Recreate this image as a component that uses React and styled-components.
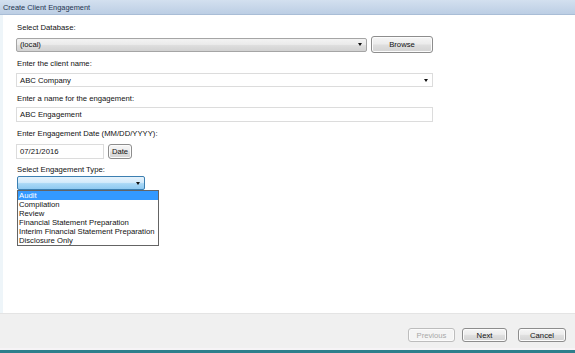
import React from "react";
import styled, { createGlobalStyle } from "styled-components";

const Global = createGlobalStyle`
  html, body { margin: 0; padding: 0; background: #ffffff; }
  body { font-family: "Liberation Sans", Arial, sans-serif; }
  #root { width: 575px; height: 353px; }
`;

const Window = styled.div`
  width: 575px;
  height: 353px;
  display: flex;
  flex-direction: column;
  box-sizing: border-box;
  border-bottom: 3px solid #2d7f8c;
  overflow: hidden;
  font-family: "Liberation Sans", Arial, sans-serif;
  font-size: 7.7px;
  color: #111111;
`;

const TitleBar = styled.div`
  height: 15px;
  flex: none;
  background: linear-gradient(#d3e0ef, #bccee4);
  border-bottom: 1px solid #a9bdd6;
  box-sizing: border-box;
  padding-left: 3px;
  display: flex;
  align-items: center;
  color: #1f3550;
  font-size: 7.4px;
`;

const Body = styled.div`
  flex: 1;
  position: relative;
  background: #ffffff;
  border-left: 3px solid #eef5f9;
  padding: 8px 0 0 13px;
  display: flex;
  flex-direction: column;
`;

const Field = styled.div`
  display: flex;
  flex-direction: column;
  margin-bottom: ${(p) => p.$mb || 7}px;
`;

const Label = styled.div`
  height: 10px;
  line-height: 10px;
  padding-left: 1px;
  margin-bottom: ${(p) => p.$mb ?? 4}px;
  white-space: nowrap;
`;

const Row = styled.div`
  display: flex;
  align-items: center;
  gap: ${(p) => p.$gap || 4}px;
`;

const Combo = styled.div`
  box-sizing: border-box;
  width: ${(p) => p.$w}px;
  height: 14px;
  display: flex;
  align-items: center;
  justify-content: space-between;
  padding: 0 3px 0 3px;
  border: 1px solid ${(p) => (p.$variant === "flat" ? "#dcdcdc" : p.$variant === "active" ? "#3c7fb1" : "#a5a5a5")};
  border-radius: ${(p) => (p.$variant === "flat" ? 0 : 2)}px;
  background: ${(p) =>
    p.$variant === "flat"
      ? "#ffffff"
      : p.$variant === "active"
      ? "linear-gradient(#e6f3fc 0%, #d4ebfb 45%, #a9d8f6 55%, #8ec9f1 100%)"
      : "linear-gradient(#f3f3f3 0%, #ebebeb 45%, #dddddd 55%, #d2d2d2 100%)"};
`;

const Caret = styled.span`
  width: 0;
  height: 0;
  border-left: 2.5px solid transparent;
  border-right: 2.5px solid transparent;
  border-top: 3px solid #111;
  margin-right: 1px;
`;

const TextBox = styled.div`
  box-sizing: border-box;
  width: ${(p) => p.$w}px;
  height: 15px;
  display: flex;
  align-items: center;
  padding-left: 3px;
  border: 1px solid #dcdcdc;
  background: #ffffff;
`;

const Button = styled.div`
  box-sizing: border-box;
  width: ${(p) => p.$w}px;
  height: ${(p) => p.$h || 14}px;
  display: flex;
  align-items: center;
  justify-content: center;
  border: 1px solid ${(p) => (p.$disabled ? "#bdbdbd" : "#8d8d8d")};
  border-radius: 3px;
  color: ${(p) => (p.$disabled ? "#a8a8a8" : "#111111")};
  background: ${(p) =>
    p.$disabled
      ? "#f4f4f4"
      : "linear-gradient(#f6f6f6 0%, #ececec 45%, #dedede 55%, #d3d3d3 100%)"};
  box-shadow: inset 0 0 0 1px ${(p) => (p.$disabled ? "#fbfbfb" : "#fcfcfc")};
`;

const DropList = styled.div`
  position: absolute;
  left: 14px;
  top: 175px;
  width: 142px;
  box-sizing: border-box;
  border: 1px solid #646464;
  background: #ffffff;
  display: flex;
  flex-direction: column;
`;

const Item = styled.div`
  height: 9px;
  line-height: 9px;
  padding-left: 1px;
  white-space: nowrap;
  color: ${(p) => (p.$selected ? "#ffffff" : "#111111")};
  background: ${(p) => (p.$selected ? "#3399ff" : "transparent")};
`;

const Footer = styled.div`
  height: 37px;
  flex: none;
  background: #f0f0f0;
  border-top: 1px solid #e4e4e4;
  border-bottom: 2px solid #f6f4f6;
  box-sizing: border-box;
  display: flex;
  justify-content: flex-end;
  align-items: flex-start;
  padding: 14px 9px 0 0;
  gap: 7px;
`;

const types = [
  "Audit",
  "Compilation",
  "Review",
  "Financial Statement Preparation",
  "Interim Financial Statement Preparation",
  "Disclosure Only",
];

export default function App() {
  return (
    <>
      <Global />
      <Window>
        <TitleBar>Create Client Engagement</TitleBar>
        <Body>
          <Field $mb={6}>
            <Label $mb={3}>Select Database:</Label>
            <Row $gap={4}>
              <Combo $w={351}>
                <span>(local)</span>
                <Caret />
              </Combo>
              <Button $w={62} $h={17}>Browse</Button>
            </Row>
          </Field>
          <Field $mb={7}>
            <Label $mb={4}>Enter the client name:</Label>
            <Combo $w={417} $variant="flat">
              <span>ABC Company</span>
              <Caret />
            </Combo>
          </Field>
          <Field $mb={7}>
            <Label $mb={3}>Enter a name for the engagement:</Label>
            <TextBox $w={417}>ABC Engagement</TextBox>
          </Field>
          <Field $mb={6}>
            <Label $mb={5}>Enter Engagement Date (MM/DD/YYYY):</Label>
            <Row $gap={4}>
              <TextBox $w={88}>07/21/2016</TextBox>
              <Button $w={24} $h={15}>Date</Button>
            </Row>
          </Field>
          <Field>
            <Label $mb={1}>Select Engagement Type:</Label>
            <Combo $w={128} $variant="active" style={{ marginLeft: 1 }}>
              <span />
              <Caret />
            </Combo>
          </Field>
          <DropList>
            {types.map((t, i) => (
              <Item key={t} $selected={i === 0}>
                {t}
              </Item>
            ))}
          </DropList>
        </Body>
        <Footer>
          <Button $w={47} $h={14} $disabled>Previous</Button>
          <Button $w={45} $h={14}>Next</Button>
          <Button $w={48} $h={14} style={{ marginLeft: 4 }}>Cancel</Button>
        </Footer>
      </Window>
    </>
  );
}
